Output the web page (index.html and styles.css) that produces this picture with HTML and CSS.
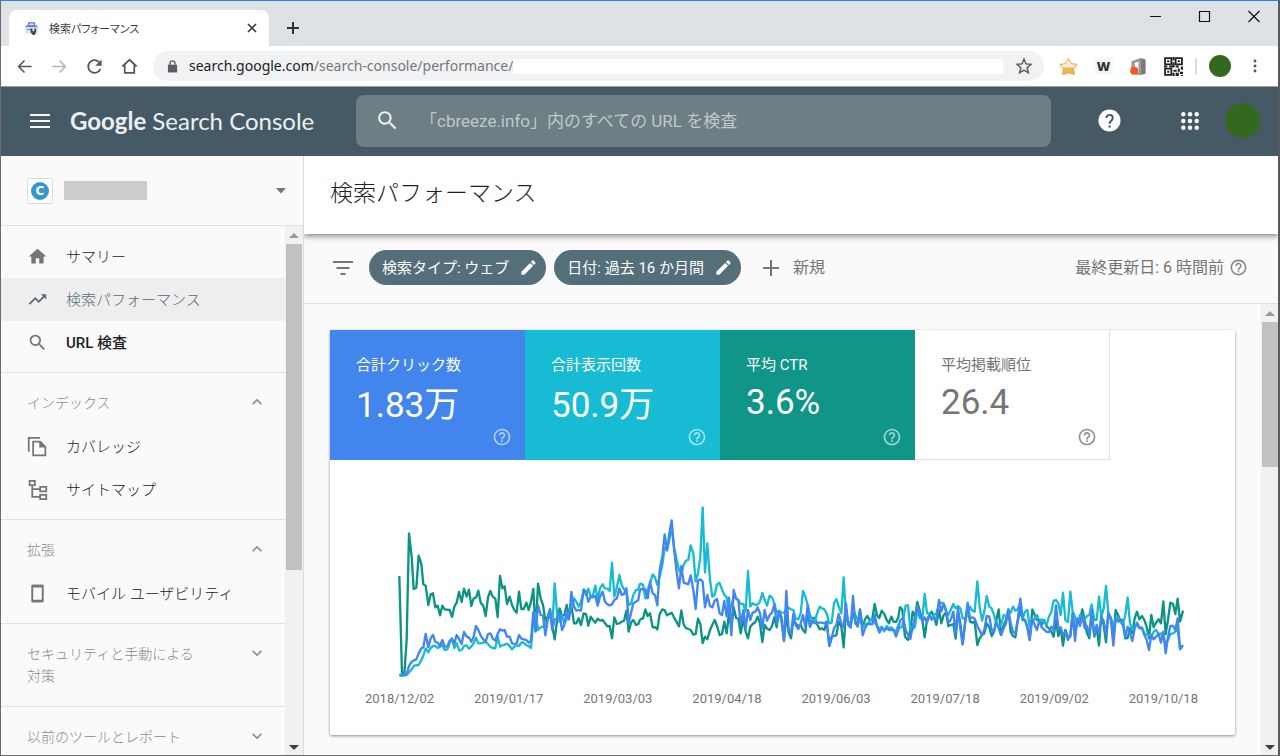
FILE: index.html
```html
<!DOCTYPE html>
<html lang="ja">
<head>
<meta charset="utf-8">
<title>検索パフォーマンス</title>
<link rel="stylesheet" href="styles.css">
</head>
<body>
<svg class="defs" aria-hidden="true">
  <symbol id="help" viewBox="0 0 24 24"><path d="M11 18h2v-2h-2v2zm1-16C6.48 2 2 6.48 2 12s4.480 10 10 10 10-4.480 10-10S17.520 2 12 2zm0 18c-4.410 0-8-3.590-8-8s3.590-8 8-8 8 3.590 8 8-3.590 8-8 8zm0-14c-2.210 0-4 1.790-4 4h2c0-1.100.9-2 2-2s2 .9 2 2c0 2-3 1.750-3 5h2c0-2.250 3-2.500 3-5 0-2.210-1.790-4-4-4z"/></symbol>
  <symbol id="search" viewBox="0 0 24 24"><path d="M15.500 14h-.79l-.28-.27A6.470 6.470 0 0 0 16 9.500 6.500 6.500 0 1 0 9.500 16c1.610 0 3.090-.59 4.230-1.570l.27.28v.79l5 4.990L20.490 19l-4.990-5zm-6 0C7.010 14 5 11.990 5 9.500S7.010 5 9.500 5 14 7.010 14 9.500 11.990 14 9.500 14z"/></symbol>
  <symbol id="edit" viewBox="0 0 24 24"><path d="M3 17.250V21h3.750L17.810 9.940l-3.750-3.750L3 17.250zM20.710 7.040a1 1 0 0 0 0-1.410l-2.340-2.340a1 1 0 0 0-1.410 0l-1.830 1.830 3.750 3.750 1.830-1.830z"/></symbol>
  <symbol id="up" viewBox="0 0 24 24"><path d="M12 8l-6 6 1.410 1.410L12 10.830l4.590 4.580L18 14z"/></symbol>
  <symbol id="down" viewBox="0 0 24 24"><path d="M16.590 8.590L12 13.170 7.410 8.590 6 10l6 6 6-6z"/></symbol>
</svg>
<div class="window">
  <div class="tabstrip">
    <div class="tab">
      <svg class="favicon" viewBox="0 0 16 16"><path d="M5 4V2h6v2" fill="none" stroke="#777" stroke-width="1.500"/><path d="M1 7l2-3h10l2 3z" fill="#5c8fe8"/><path d="M1 7h14v7H1z" fill="#e3e6ea"/><path d="M3 8.500h5v1H3z" fill="#4285f4"/><path d="M7 8h2v3h2V8h2v3l-1.500 4h-2L7 12z" fill="#444"/></svg>
      <span class="tab-title">検索パフォーマンス</span>
      <button class="plain tab-close" aria-label="タブを閉じる"><svg viewBox="0 0 12 12"><path d="M2 2l8 8M10 2l-8 8" fill="none" stroke="#3c4043" stroke-width="1.700"/></svg></button>
    </div>
    <button class="plain new-tab" aria-label="新しいタブ"><svg viewBox="0 0 14 14"><path d="M7 1v12M1 7h12" stroke="#333" stroke-width="2"/></svg></button>
    <div class="window-controls">
      <button class="plain" aria-label="最小化"><svg viewBox="0 0 12 12"><path d="M0 6.500h11" stroke="#111"/></svg></button>
      <button class="plain" aria-label="最大化"><svg viewBox="0 0 12 12"><path d="M.5 1.500h10v10H.5z" fill="none" stroke="#111" stroke-width="1.200"/></svg></button>
      <button class="plain" aria-label="閉じる"><svg viewBox="0 0 12 12"><path d="M.5 1l11 11M11.500 1l-11 11" stroke="#111" stroke-width="1.200"/></svg></button>
    </div>
  </div>

  <div class="toolbar">
    <button class="plain tool" aria-label="戻る"><svg viewBox="0 0 24 24"><path d="M21 12H5M12 4.500L4.500 12l7.500 7.500" fill="none" stroke="#54585c" stroke-width="2"/></svg></button>
    <button class="plain tool" aria-label="進む"><svg viewBox="0 0 24 24"><path d="M3 12h16M12 4.500l7.500 7.500-7.500 7.500" fill="none" stroke="#b4b6b9" stroke-width="2"/></svg></button>
    <button class="plain tool" aria-label="再読み込み"><svg viewBox="0 0 24 24"><path d="M19.500 15a8 8 0 1 1-1.700-8.600" fill="none" stroke="#54585c" stroke-width="2.200"/><path d="M21 3v8h-8z" fill="#54585c"/></svg></button>
    <button class="plain tool" aria-label="ホーム"><svg viewBox="0 0 24 24"><path d="M3 12l9-8.500 9 8.500M6 10.500V20h12v-9.500" fill="none" stroke="#54585c" stroke-width="2.200"/></svg></button>
    <div class="omnibox">
      <svg class="lock" viewBox="0 0 12 14"><path d="M1 5h10v8.500H1z" fill="#5a5e62"/><path d="M3.300 5V3.500a2.700 2.700 0 0 1 5.400 0V5" fill="none" stroke="#5a5e62" stroke-width="1.500"/></svg>
      <span class="url"><span class="host">search.google.com</span>/search-console/performance/</span>
      <span class="url-mask"></span>
      <button class="plain star" aria-label="ブックマーク"><svg viewBox="0 0 24 24"><path d="M12 3.500l2.300 6 6.200.4-4.800 4.100 1.600 6.200L12 16.900l-5.300 3.300L8.300 14 3.500 9.900l6.200-.4z" fill="none" stroke="#54585c" stroke-width="1.700"/></svg></button>
    </div>
    <button class="plain tool ext" aria-label="お気に入り"><svg viewBox="0 0 20 20"><path d="M10 1.500l3 5.300 5.600.9c.6.200.6.700.3 1.100L15.500 12l.8 6c0 .6-.5.800-1 .5L10 16.800l-5.300 1.700c-.5.300-1 .1-1-.5l.8-6-3.400-3.200c-.3-.4-.3-.9.3-1.100L7 6.800z" fill="#edb650" stroke="#d9a75c" stroke-width=".8"/><path d="M10 2.500l2.600 4.800 5.400 1-2.500 2.700h-11L2 8.300l5.400-1z" fill="#f9eedb"/></svg></button>
    <button class="plain tool ext word" aria-label="W"><span>W</span></button>
    <button class="plain tool ext" aria-label="Office"><svg viewBox="0 0 20 20"><path d="M2.500 4.500L12 1v18H8v-2l2-1V5L6 6v6H2.500z" fill="#999"/><path d="M12 1l5.500 1.500v15L12 19z" fill="#7a7a7a"/><circle cx="5.500" cy="14.500" r="4.200" fill="#fa5420"/></svg></button>
    <button class="plain tool ext" aria-label="QR"><svg viewBox="0 0 18 18"><path d="M1 1h6v6H1zM11 1h6v6h-6zM1 11h6v6H1z" fill="none" stroke="#222" stroke-width="1.700"/><path d="M3 3h2v2H3zM13 3h2v2h-2zM3 13h2v2H3zM8 0h2v3H8zM8 5h2v5H8zM0 8h3v2H0zM5 8h3v2H5zM11 8h3v2h-3zM16 9h2v3h-2zM9 12h3v2H9zM8 15h2v3H8zM13 11h2v3h-2zM11 15h3v3h-3zM15 14h3v2h-3zM16 17h2v1h-2z" fill="#222"/></svg></button>
    <span class="separator"></span>
    <button class="plain profile" aria-label="プロフィール"></button>
    <button class="plain tool more" aria-label="メニュー"><svg viewBox="0 0 24 24" fill="#54585c"><circle cx="12" cy="4.500" r="2.200"/><circle cx="12" cy="12" r="2.200"/><circle cx="12" cy="19.500" r="2.200"/></svg></button>
  </div>

  <header class="app-header">
    <button class="plain menu" aria-label="メインメニュー"><svg viewBox="0 0 20 14"><path d="M0 1h20M0 7h20M0 13h20" stroke="#f4f6f6" stroke-width="2"/></svg></button>
    <a class="logo" href="#"><b>Google</b> Search Console</a>
    <div class="inspect">
      <svg fill="#eef1f1"><use href="#search"/></svg>
      <input type="text" aria-label="URL 検査" placeholder="「cbreeze.info」内のすべての URL を検査">
    </div>
    <div class="header-actions">
      <button class="plain" aria-label="ヘルプ"><svg class="help-solid" viewBox="0 0 24 24"><circle cx="12" cy="12" r="11.500" fill="#fff"/><path d="M8.700 9.500c0-4.600 6.700-4.300 6.700 0 0 2.600-3.300 2.900-3.300 5.800" fill="none" stroke="#455a64" stroke-width="2"/><path d="M11 17.200h2.200v2.200H11z" fill="#455a64"/></svg></button>
      <button class="plain apps" aria-label="アプリ"><svg viewBox="0 0 18 18" fill="#fff"><circle cx="2.300" cy="2.300" r="2.200"/><circle cx="9" cy="2.300" r="2.200"/><circle cx="15.700" cy="2.300" r="2.200"/><circle cx="2.300" cy="9" r="2.200"/><circle cx="9" cy="9" r="2.200"/><circle cx="15.700" cy="9" r="2.200"/><circle cx="2.300" cy="15.700" r="2.200"/><circle cx="9" cy="15.700" r="2.200"/><circle cx="15.700" cy="15.700" r="2.200"/></svg></button>
      <button class="plain account" aria-label="アカウント"></button>
    </div>
  </header>

  <div class="body">
    <aside class="sidebar">
      <button class="plain property" aria-label="プロパティ">
        <span class="property-icon"><span>C</span></span>
        <span class="property-name"></span>
        <svg class="caret" viewBox="0 0 10 6"><path d="M0 0h10L5 5.500z" fill="#757575"/></svg>
      </button>
      <div class="nav-scroll">
        <nav class="nav">
          <section>
            <a class="item" href="#"><svg viewBox="0 0 24 24"><path d="M10 20v-6h4v6h5v-8h3L12 3 2 12h3v8z"/></svg>サマリー</a>
            <a class="item current" href="#"><svg viewBox="0 0 24 24"><path d="M16 6l2.290 2.290-4.880 4.880-4-4L2 16.590 3.410 18l6-6 4 4 6.300-6.290L22 12V6z"/></svg>検索パフォーマンス</a>
            <a class="item medium" href="#"><svg><use href="#search"/></svg>URL 検査</a>
          </section>
          <section>
            <button class="plain group">インデックス<svg><use href="#up"/></svg></button>
            <a class="item" href="#"><svg viewBox="0 0 24 24"><path d="M2 18V2h13M7 6.500h8l6 6V22H7z" fill="none" stroke="#757575" stroke-width="2"/><path d="M14 6v7h7z"/></svg>カバレッジ</a>
            <a class="item" href="#"><svg viewBox="0 0 24 24"><path d="M3 2h6v5H3zM15 9h7v5h-7zM15 18h7v5h-7zM6 7v13.500h9M6 11.500h9" fill="none" stroke="#757575" stroke-width="2"/></svg>サイトマップ</a>
          </section>
          <section>
            <button class="plain group">拡張<svg><use href="#up"/></svg></button>
            <a class="item" href="#"><svg viewBox="0 0 24 24"><path d="M6 3h12v18H6z" fill="none" stroke="#757575" stroke-width="2.200" stroke-linejoin="round"/><path d="M6 2h12v3H6zM6 19h12v3H6z"/></svg>モバイル ユーザビリティ</a>
          </section>
          <section>
            <button class="plain group">セキュリティと手動による<br>対策<svg><use href="#down"/></svg></button>
          </section>
          <section>
            <button class="plain group">以前のツールとレポート<svg><use href="#down"/></svg></button>
          </section>
        </nav>
        <div class="scrollbar nav-bar" aria-hidden="true"><i class="arrow arrow-up"></i><i class="thumb"></i><i class="arrow arrow-down"></i></div>
      </div>
    </aside>

    <main class="main">
      <div class="title-bar"><h1>検索パフォーマンス</h1></div>
      <div class="filters">
        <svg class="filter-icon" viewBox="0 0 20 14"><path d="M0 1h20M3.500 7h13M7.500 13h5" stroke="#757575" stroke-width="2"/></svg>
        <button class="chip">検索タイプ: ウェブ<svg><use href="#edit"/></svg></button>
        <button class="chip">日付: 過去 16 か月間<svg><use href="#edit"/></svg></button>
        <button class="plain add"><svg viewBox="0 0 16 16"><path d="M8 0v16M0 8h16" stroke="#757575" stroke-width="2"/></svg>新規</button>
        <span class="updated">最終更新日: 6 時間前<svg><use href="#help"/></svg></span>
      </div>
      <div class="scroll-area">
        <div class="content">
          <div class="card">
            <div class="metrics">
              <button class="metric clicks"><span>合計クリック数</span><strong class="kanji">1.83万</strong><svg><use href="#help"/></svg></button>
              <button class="metric views"><span>合計表示回数</span><strong class="kanji">50.9万</strong><svg><use href="#help"/></svg></button>
              <button class="metric ctr"><span>平均 CTR</span><strong>3.6%</strong><svg><use href="#help"/></svg></button>
              <button class="metric position"><span>平均掲載順位</span><strong>26.4</strong><svg><use href="#help"/></svg></button>
            </div>
            <svg class="chart" viewBox="-150 0 2715 600" role="img" aria-label="検索パフォーマンスの推移">
              <g stroke="#0b9483">
                <polyline points="58,258 66,552 73,552 80,450 87,130 95,200 101,297 109,293 116,197 124,222 130,283 137,287 145,345 152,313 159,310 166,352 173,347 180,376 187,347 194,358 209,360 216,381 223,350 230,338 237,306 245,336 252,296 260,320 267,299 274,348 281,325 288,323 295,302 302,338 310,348 317,378 324,322 331,303 338,320 346,326 353,381 360,258 367,295 374,289 381,342 389,320 396,345 403,360 410,368 417,305 424,357 431,357 439,338 446,360 453,335 460,297 467,425 474,281 482,325 489,345 496,392 503,380 510,360 517,410 524,448 532,385 539,355 546,378 553,375 560,345 567,380 574,345 582,400 589,400 596,385 603,405 611,370 618,372 625,407 632,380 639,390 646,398 653,386 660,392 668,390 675,400 682,409 689,408 696,445 703,382 711,402 718,400 725,395 732,393 739,362 746,425 753,398 760,390 768,405 775,402 780,388"/>
                <polyline transform="translate(780 0)" points="0,388 9,385 16,358 23,378 30,370 38,412 45,411 52,418 59,372 67,358 74,361 81,376 88,372 95,368 102,382 109,394 117,409 124,361 131,404 138,414 145,417 152,420 160,434 167,432 174,386 181,402 188,459 195,440 202,448 210,420 217,404 224,390 231,408 239,435 246,432 253,395 260,430 267,370 274,410 281,352 288,384 295,386 302,430 310,388 317,425 324,445 331,410 338,402 346,396 353,380 360,400 367,456 374,405 381,416 389,420 396,408 403,382 410,412 417,365 424,380 432,453 439,372 446,428 453,445 460,390 467,400 475,408 482,405 489,420 496,428 503,365 510,410 517,384 524,384 532,404 539,418 546,415 553,420 560,395 568,466 575,440 582,438 589,436 596,395 604,410 611,472 618,362 625,400 632,412 639,360 646,395 653,408 660,358 668,412 675,388 682,378 690,392 697,385 704,342 711,376 718,384 725,362 733,372 740,390 747,400 754,380 761,395 768,396 775,382 780,350"/>
                <polyline transform="translate(1560 150)" points="0,200 7,210 15,290 24,300 31,270 38,215 45,230 52,186 60,215 67,240 74,292 81,240 88,225 95,215 102,230 109,255 117,210 124,250 131,225 138,218 145,258 152,255 160,252 167,296 174,215 181,250 188,310 195,250 203,200 210,245 217,248 224,245 232,315 239,295 246,285 253,280 260,250 268,262 275,288 282,275 289,240 296,208 303,285 311,255 318,240 325,208 332,275 339,288 346,292 353,245 361,210 368,240 375,240 382,260 389,298 397,208 404,225 411,240 418,240 425,255 432,240 440,260 447,265 454,275 461,290 468,240 475,288 482,265 489,317 496,270 504,290 511,290 518,220 525,280 532,245 540,240 547,208 554,240 561,280 568,295 575,220 583,290 590,260 597,317 604,225 611,255 618,307 625,220 633,235 640,300 647,210 654,225 661,245 668,240 676,295 683,294 690,265 697,280 704,235 711,215 718,238 726,228 733,240 740,260 747,295 754,225 761,262 768,248 776,238 783,250 790,184 797,282 804,240 811,188 819,192 826,222 833,176 840,245 849,212"/>
              </g>
              <g stroke="#17bcd2">
                <polyline points="58,555 80,555 95,538 102,527 116,525 124,510 130,497 137,475 145,487 152,474 159,468 166,468 173,474 180,470 187,466 194,480 202,478 209,460 216,445 223,474 230,460 238,482 245,480 252,468 260,466 267,476 274,470 281,460 288,443 295,460 302,460 310,458 317,455 324,462 331,470 338,474 346,475 353,440 360,470 367,466 374,464 381,461 389,468 396,478 403,470 410,466 417,468 424,457 431,458 439,466 446,468 453,474 460,390 467,370 474,420 482,412 489,410 496,400 503,390 510,370 517,410 524,280 532,380 539,395 546,378 553,400 560,388 567,370 574,350 582,325 589,335 596,350 603,335 611,300 618,315 625,296 632,320 639,315 646,287 653,330 660,295 668,283 675,295 682,296 689,303 696,218 703,320 711,290 718,255 725,285 732,298 739,300 746,345 753,342 760,315 768,300 775,298 780,280"/>
                <polyline transform="translate(780 0)" points="0,280 9,284 16,325 23,300 30,280 38,253 45,262 52,285 59,260 67,225 74,172 81,180 88,150 95,110 102,170 109,205 117,240 124,250 131,225 138,212 145,210 152,166 160,190 167,275 174,250 181,200 188,52 195,248 202,160 210,270 217,320 224,315 231,283 238,278 246,298 253,315 260,322 267,370 274,345 281,320 288,325 295,332 302,342 310,342 317,365 324,243 331,350 338,340 346,345 353,343 360,335 367,309 374,330 381,347 389,317 396,322 403,340 410,368 417,362 424,368 432,368 439,360 446,353 453,358 460,360 467,385 475,388 482,370 489,303 496,320 503,345 510,375 517,390 524,395 532,368 539,350 546,355 553,358 560,370 568,400 575,398 582,340 589,327 596,350 604,370 611,262 618,380 625,395 632,400 639,355 646,375 653,390 660,380 668,410 675,405 682,400 690,395 697,385 704,400 711,405 718,418 725,410 733,424 740,408 747,415 754,412 761,420 768,425 775,405 780,415"/>
                <polyline transform="translate(1560 150)" points="0,265 7,260 10,235 17,196 24,196 31,270 38,268 45,260 52,210 60,235 67,235 74,162 81,220 88,220 95,240 102,225 109,220 117,195 124,188 131,190 138,215 145,225 152,210 160,192 167,205 174,198 181,205 188,235 195,235 203,225 210,200 217,212 224,215 232,124 239,200 246,242 253,215 260,168 268,200 275,205 282,225 289,250 296,260 303,255 311,225 318,230 325,220 332,218 339,200 346,212 353,208 361,190 368,235 375,215 382,210 389,260 397,240 404,238 411,225 418,245 425,238 432,245 440,255 447,230 454,215 461,182 468,180 475,190 482,225 489,158 496,240 504,246 511,155 518,215 525,230 532,255 540,225 547,230 554,240 561,228 568,225 575,193 583,240 590,240 597,170 604,230 611,205 618,138 625,220 633,235 640,258 647,235 654,232 661,245 668,255 676,225 683,172 690,250 697,270 704,262 711,250 718,262 726,262 733,280 740,284 747,285 754,290 761,275 768,270 776,282 783,280 790,295 797,310 804,300 811,282 819,280 826,275 833,265 840,322 849,322"/>
              </g>
              <g stroke="#4285f4">
                <polyline points="58,555 66,558 80,553 87,528 95,515 102,511 109,508 116,490 124,475 130,472 137,432 145,472 152,445 159,435 166,456 173,458 180,468 187,450 194,470 202,470 209,452 216,447 223,460 230,435 238,448 245,462 252,426 260,440 267,443 274,455 281,440 288,408 295,420 302,437 310,448 317,455 324,432 331,430 338,445 346,452 353,432 360,418 367,422 374,420 381,440 389,440 396,460 403,462 410,460 417,435 424,446 431,448 439,450 446,458 453,452 460,366 467,420 474,346 482,375 489,377 496,436 503,390 510,357 517,420 524,388 532,386 539,370 546,420 553,405 560,362 567,388 574,306 582,350 589,362 596,360 603,362 611,298 618,305 625,335 632,320 639,322 646,318 653,347 660,320 668,305 675,335 682,343 689,346 696,343 703,330 711,325 718,295 725,315 732,312 739,295 746,400 753,370 760,340 768,335 775,330 780,298"/>
                <polyline transform="translate(780 0)" points="0,298 9,297 16,298 23,325 30,275 38,310 45,315 52,346 59,240 67,200 74,133 81,182 88,130 95,91 102,175 109,240 117,295 124,228 131,278 138,280 145,283 152,256 160,300 167,357 174,272 181,268 188,275 195,352 202,315 210,348 217,352 224,332 231,327 239,370 246,375 253,333 260,380 267,323 274,436 281,300 288,325 295,330 302,405 310,360 317,415 324,360 331,390 338,368 346,365 353,352 360,370 367,415 374,360 381,392 389,375 396,368 403,343 410,400 417,365 424,390 432,450 439,303 446,420 453,432 460,372 467,405 475,417 482,400 489,375 496,410 503,345 510,410 517,395 524,400 532,398 539,398 546,398 553,400 560,395 568,468 575,445 582,415 589,405 596,372 604,400 611,412 618,340 625,405 632,412 639,318 646,400 653,410 660,362 668,436 675,415 682,402 690,402 697,403 704,373 711,410 718,428 725,415 733,418 740,415 747,420 754,420 761,420 768,440 775,420 780,390"/>
                <polyline transform="translate(1560 150)" points="0,240 10,235 17,270 24,285 31,297 38,260 45,230 52,198 60,220 67,245 74,232 81,248 88,228 95,235 102,235 109,240 117,180 124,215 131,192 138,210 145,248 152,240 160,215 167,280 174,205 181,265 188,314 195,250 203,188 210,235 217,232 224,236 232,258 239,272 246,285 253,270 260,228 268,230 275,270 282,275 289,245 296,265 303,285 311,265 318,250 325,208 332,250 339,275 346,280 353,240 361,176 368,235 375,240 382,262 389,300 397,235 404,255 411,270 418,240 425,262 432,268 440,276 447,276 454,260 461,270 468,196 475,265 482,262 489,285 496,275 504,300 511,285 518,220 525,303 532,235 540,258 547,225 554,265 561,258 568,285 575,210 583,285 590,255 597,280 604,235 611,242 618,285 625,220 633,240 640,317 647,235 654,245 661,237 668,248 676,290 683,260 690,280 697,303 704,265 711,248 718,265 726,265 733,285 740,300 747,330 754,285 761,298 768,290 776,282 783,308 790,275 797,340 804,290 811,258 819,258 826,270 833,235 840,328 849,315"/>
              </g>
            </svg>
            <div class="axis"><span>2018/12/02</span><span>2019/01/17</span><span>2019/03/03</span><span>2019/04/18</span><span>2019/06/03</span><span>2019/07/18</span><span>2019/09/02</span><span>2019/10/18</span></div>
          </div>
        </div>
        <div class="scrollbar main-bar" aria-hidden="true"><i class="arrow arrow-up"></i><i class="thumb"></i><i class="arrow arrow-down"></i></div>
      </div>
    </main>
  </div>
</div>
</body>
</html>
```
FILE: styles.css
```css
* { box-sizing: border-box; }

body {
  margin: 0;
  font-family: Roboto, "Noto Sans CJK JP", sans-serif;
  font-size: 15px;
  line-height: 22px;
  color: #212121;
}

svg { display: block; flex: none; }
.defs { position: absolute; width: 0; height: 0; }
a { color: inherit; text-decoration: none; }
button { font: inherit; color: inherit; cursor: pointer; }
.plain { border: 0; padding: 0; background: none; }

.window {
  display: flex;
  flex-direction: column;
  height: 100vh;
  overflow: hidden;
  border: 1px solid #6b6b6b;
  border-top-color: #2e86d6;
  border-right: 2px solid #5a5a5a;
}

/* Browser tabs */
.tabstrip {
  display: flex;
  flex: none;
  height: 45px;
  padding-left: 8px;
  background: #dee1e6;
}
.tab {
  display: flex;
  align-items: center;
  width: 260px;
  margin-top: 9px;
  padding: 0 11px 0 15px;
  border-radius: 8px 8px 0 0;
  background: #fff;
}
.favicon { width: 15px; height: 15px; }
.tab-title {
  flex: 1;
  margin-left: 10px;
  font-family: "Noto Sans CJK JP", sans-serif;
  font-size: 11px;
  font-feature-settings: "palt";
  color: #3c4043;
}
.tab-close svg { width: 12px; height: 12px; }
.new-tab { width: 48px; padding: 9px 0 0 17px; }
.new-tab svg { width: 14px; height: 14px; }
.window-controls { display: flex; margin-left: auto; }
.window-controls button {
  display: flex;
  justify-content: center;
  width: 49px;
  padding-top: 9px;
}
.window-controls svg { width: 12px; height: 12px; overflow: visible; }

/* Browser toolbar */
.toolbar {
  display: flex;
  flex: none;
  align-items: center;
  height: 41px;
  padding: 0 6px;
  border-bottom: 1px solid #9a9ea1;
  background: #fff;
}
.tool {
  display: flex;
  justify-content: center;
  align-items: center;
  width: 35px;
  height: 30px;
}
.tool svg { width: 19px; height: 19px; }
.more svg { width: 16px; height: 16px; }
.omnibox {
  display: flex;
  flex: 1;
  align-items: center;
  height: 30px;
  margin: 0 7px 0 6px;
  padding: 0 10px 0 14px;
  border-radius: 15px;
  background: #f1f2f4;
}
.lock { width: 11px; height: 13px; }
.url {
  margin-left: 11px;
  font-family: "Noto Sans", sans-serif;
  font-size: 14px;
  color: #74787c;
}
.host { color: #202124; }
.url-mask { flex: 1; height: 15px; margin-right: 11px; background: #fff; }
.star svg { width: 20px; height: 20px; }
.word span {
  width: 18px;
  background: #f7f7f7;
  font: 800 13px/18px "Open Sans", sans-serif;
  color: #333;
}
.separator { width: 2px; height: 17px; margin: 0 12px 0 4px; background: #dadce0; }
.profile { width: 22px; height: 22px; border-radius: 50%; background: #33691e; }
.more { margin-left: 6px; }

/* Application header */
.app-header {
  display: flex;
  flex: none;
  align-items: center;
  height: 69px;
  padding: 0 18px 2px 29px;
  background: #455a64;
}
.menu svg { width: 20px; height: 14px; }
.logo {
  width: 266px;
  margin: 0 0 0 20px;
  font-family: Lato, sans-serif;
  font-size: 24px;
  line-height: 32px;
  white-space: nowrap;
  color: #eceff1;
}
.inspect {
  display: flex;
  flex: 1;
  align-items: center;
  height: 52px;
  margin: 0 47px 0 20px;
  padding: 0 19px;
  border-radius: 8px;
  background: #6d7e84;
}
.inspect svg { width: 25px; height: 25px; }
.inspect input {
  flex: 1;
  min-width: 0;
  margin-left: 20px;
  padding: 0;
  border: 0;
  outline: 0;
  background: none;
  font: inherit;
  font-size: 17px;
}
.inspect input::placeholder { color: #c0c8cb; opacity: 1; }
.header-actions { display: flex; align-items: center; }
.help-solid { width: 23px; height: 23px; }
.apps { margin: 0 26px 0 60px; }
.apps svg { width: 18px; height: 18px; }
.account { width: 35px; height: 35px; border-radius: 50%; background: #33691e; }

.body { display: flex; flex: 1; min-height: 0; background: #fafafa; }

/* Sidebar */
.sidebar {
  display: flex;
  flex: none;
  flex-direction: column;
  width: 303px;
  border-right: 1px solid #dcdcdc;
}
.property {
  display: flex;
  flex: none;
  align-items: center;
  height: 70px;
  padding: 0 17px 0 26px;
  border-bottom: 1px solid #e0e0e0;
}
.property-icon {
  display: grid;
  place-items: center;
  width: 26px;
  height: 26px;
  border: 1px solid #dcdcdc;
  border-radius: 2px;
  background: #fff;
}
.property-icon span {
  width: 18px;
  height: 18px;
  border-radius: 50%;
  background: #3598cc;
  font: bold 12px/18px "DejaVu Sans", sans-serif;
  color: #fff;
}
.property-name { width: 83px; height: 19px; margin-left: 11px; background: #ccc; }
.caret { width: 10px; height: 6px; margin-left: auto; }

.nav-scroll { display: flex; flex: 1; min-height: 0; }
.nav { flex: 1; padding-top: 1px; overflow: hidden; }
.nav section { padding: 8px 0; border-bottom: 1px solid #e0e0e0; }
.item {
  display: flex;
  align-items: center;
  height: 43px;
  padding-left: 26px;
  font-weight: 300;
}
.item svg { width: 21px; height: 21px; margin-right: 18px; fill: #757575; }
.current { background: #eee; color: #546e7a; }
.current svg { fill: #546e7a; }
.medium { font-weight: 500; }
.group {
  display: flex;
  justify-content: space-between;
  width: 100%;
  padding: 11px 18px 11px 26px;
  font-size: 14px;
  font-weight: 300;
  text-align: left;
  color: #8a8a8a;
}
.group svg { width: 20px; height: 20px; fill: #8a8a8a; }

.scrollbar {
  display: flex;
  flex: none;
  flex-direction: column;
  align-items: center;
  background: #f1f1f1;
}
.nav-bar { width: 18px; }
.main-bar { width: 17px; }
.thumb { width: 16px; background: #c1c1c1; }
.nav-bar .thumb { height: 326px; }
.main-bar .thumb { height: 145px; }
.arrow { border: 5px solid transparent; }
.arrow-up { margin: 2px 0 6px; border-bottom-color: #9a9a9a; }
.arrow-down { margin: auto 0 0; border-top-color: #404040; }

/* Report */
.main { display: flex; flex: 1; flex-direction: column; min-width: 0; }
.title-bar {
  z-index: 1;
  flex: none;
  height: 78px;
  padding: 21px 26px;
  background: #fff;
  box-shadow: 0 2px 6px rgba(0, 0, 0, .5);
  clip-path: inset(0 0 -12px 0);
}
h1 { margin: 0; font-size: 23px; line-height: 34px; font-weight: 300; }
.filters {
  display: flex;
  flex: none;
  align-items: center;
  height: 70px;
  padding: 0 30px 2px 29px;
  border-bottom: 1px solid #e0e0e0;
}
.filter-icon { width: 20px; height: 14px; margin-right: 16px; }
.chip {
  display: flex;
  align-items: center;
  height: 35px;
  margin-right: 8px;
  padding: 0 8px 0 13px;
  border: 0;
  border-radius: 18px;
  background: #546e7a;
  color: #fff;
}
.chip svg { width: 19px; height: 19px; margin-left: 10px; fill: #fff; }
.add { display: flex; align-items: center; margin-left: 14px; font-size: 16px; color: #757575; }
.add svg { width: 16px; height: 16px; margin-right: 14px; }
.updated { display: flex; align-items: center; margin-left: auto; font-size: 16px; color: #757575; }
.updated svg { width: 19px; height: 19px; margin-left: 5px; fill: #8a8a8a; }
.scroll-area { display: flex; flex: 1; min-height: 0; }
.content { flex: 1; min-width: 0; padding: 26px; }
.card {
  border-radius: 2px;
  background: #fff;
  box-shadow: 0 1px 3px rgba(0, 0, 0, .45);
}
.metrics { display: flex; }
.metric {
  display: flex;
  flex-direction: column;
  width: 195px;
  height: 130px;
  padding: 24px 13px 13px 26px;
  border: 0;
  text-align: left;
  color: #fff;
}
.metric strong { margin-top: 7px; font-size: 35px; line-height: 40px; font-weight: 400; }
.metric .kanji { margin-top: 10px; }
.metric svg { width: 20px; height: 20px; margin: auto 0 0 auto; fill: currentColor; opacity: .6; }
.clicks { background: #4285ec; }
.views { background: #17bcd4; }
.ctr { background: #0f9688; }
.position {
  padding-right: 12px;
  padding-bottom: 12px;
  border: solid #e0e0e0;
  border-width: 0 1px 1px 0;
  background: #fff;
  color: #757575;
}
.position svg { opacity: .8; }
.chart { width: 100%; margin-top: 30px; fill: none; stroke-width: 7; stroke-linejoin: round; }
.axis {
  display: flex;
  justify-content: space-between;
  padding: 0 37px 27px 35px;
  font-size: 13px;
  line-height: 18px;
  color: #757575;
}
```
